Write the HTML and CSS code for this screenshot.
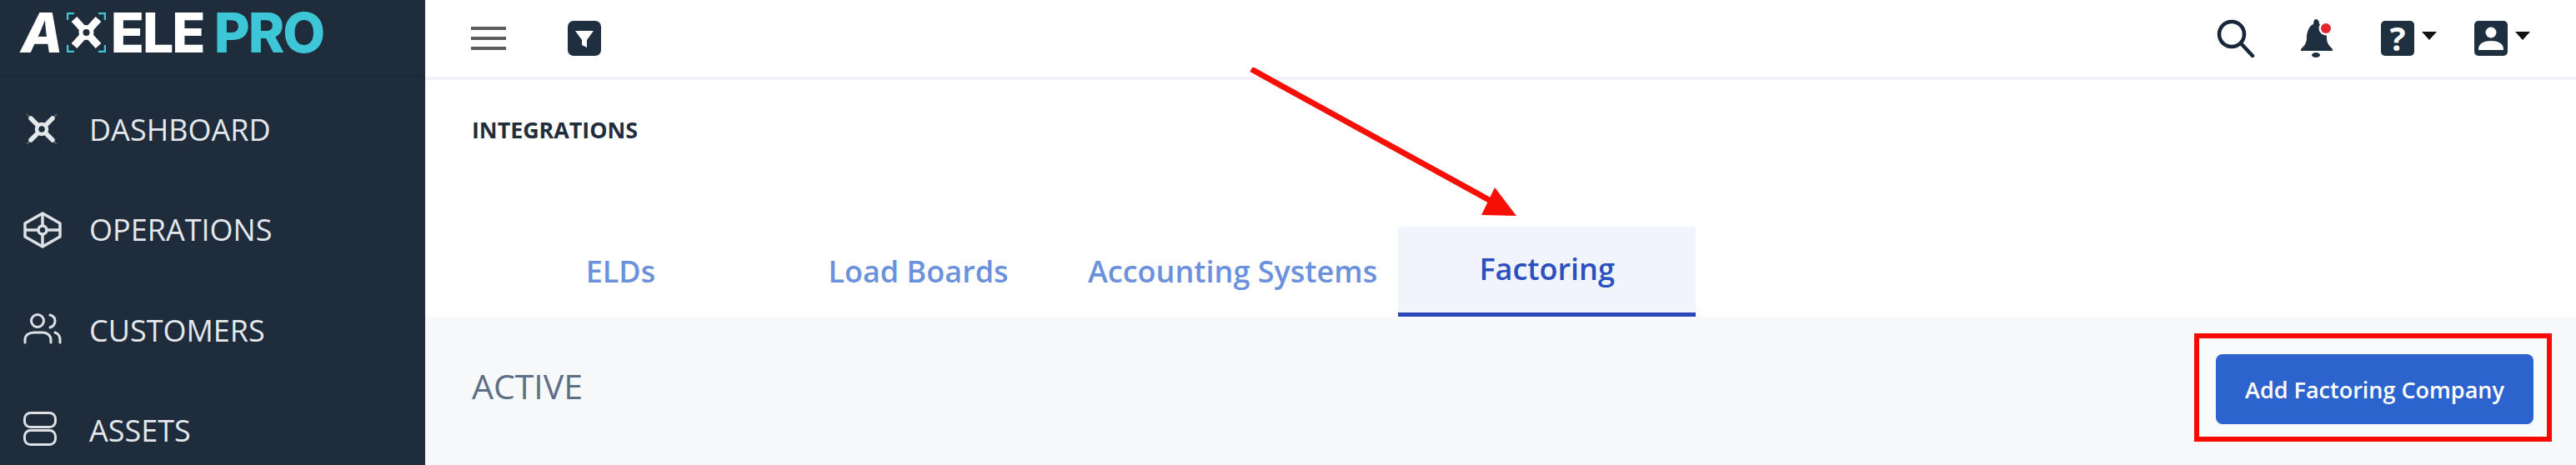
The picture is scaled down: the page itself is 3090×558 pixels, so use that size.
FILE: index.html
```html
<!DOCTYPE html>
<html>
  <head>
    <title>Integrations</title>
    <link rel="stylesheet" href="styles.css">
  </head>
  <body>
    <aside class="sidebar">
      <div class="logo">
        <span class="logo-a">A</span>
        <svg class="logo-x" viewBox="0 0 47 48" width="47" height="48">
          <path d="M9 8 L38 40 M38 8 L9 40" stroke="#fff" stroke-width="9" fill="none"/>
          <circle cx="23.5" cy="24" r="9" fill="#fff"/>
          <circle cx="23.5" cy="24" r="4" fill="#1e2c3c"/>
          <path d="M1 9 V1 H9 M46 9 V1 H38 M1 39 V47 H9 M46 39 V47 H38" stroke="#3cc6d6" stroke-width="2.5" fill="none"/>
        </svg>
        <span class="logo-ele">ELE</span>
        <span class="logo-pro">PRO</span>
      </div>
      <nav class="nav">
        <a class="nav-item">
          <span class="nav-icon">
            <svg viewBox="0 0 44 44" width="44" height="44" fill="none" stroke="#e4e8ec">
              <path d="M4 4 L40 40 M40 4 L4 40" stroke-width="1.5" opacity=".35"/>
              <path d="M9 9 L35 35 M35 9 L9 35" stroke-width="5.5" stroke-linecap="round"/>
              <circle cx="22" cy="22" r="6" fill="#1e2c3c" stroke-width="4.5"/>
            </svg>
          </span>
          DASHBOARD
        </a>
        <a class="nav-item">
          <span class="nav-icon">
            <svg viewBox="0 0 46 44" width="46" height="44" fill="none" stroke="#dde1e6" stroke-width="3.5" stroke-linejoin="round">
              <path d="M23 2 L44 14 V30 L23 42 L2 30 V14 Z"/>
              <path d="M2 22 H44 M23 2 V42"/>
              <circle cx="23" cy="22" r="5" fill="#1e2c3c" stroke-width="3.5"/>
            </svg>
          </span>
          OPERATIONS
        </a>
        <a class="nav-item">
          <span class="nav-icon nudge">
            <svg viewBox="0 0 46 38" width="46" height="38" fill="none" stroke="#dde1e6" stroke-width="3" stroke-linecap="round">
              <circle cx="17" cy="10" r="7.5"/>
              <path d="M32 3 C40 5 40 15 32 18"/>
              <path d="M2 36 V33 C2 27 7 24 13 24 H23 C29 24 33 28 33 33 V36"/>
              <path d="M38 24 C42 25 44 29 44 33 V36"/>
            </svg>
          </span>
          CUSTOMERS
        </a>
        <a class="nav-item">
          <span class="nav-icon nudge">
            <svg viewBox="0 0 40 41" width="40" height="41" fill="none" stroke="#dde1e6" stroke-width="3">
              <rect x="1.5" y="1.5" width="37" height="17" rx="7"/>
              <rect x="1.5" y="22.5" width="37" height="17" rx="7"/>
            </svg>
          </span>
          ASSETS
        </a>
      </nav>
    </aside>

    <div class="main">
      <header class="topbar">
        <div class="topbar-left">
          <div class="burger"><i></i><i></i><i></i></div>
          <svg class="icon-box" viewBox="0 0 40 42" width="40" height="42">
            <rect width="40" height="42" rx="7" fill="#1e2f40"/>
            <path d="M9 12 H31 L23 23 V32 L17 29 V23 Z" fill="#fff"/>
          </svg>
        </div>
        <div class="topbar-right">
          <svg class="search" viewBox="0 0 46 46" width="46" height="46" fill="none" stroke="#18283a" stroke-width="4.5" stroke-linecap="round">
            <circle cx="18" cy="18" r="15"/>
            <path d="M29 29 L43 44"/>
          </svg>
          <svg viewBox="0 0 40 46" width="40" height="46">
            <path d="M19 0 C22 0 23 3 23 6 C30 8 32 15 32 22 C32 29 35 32 39 36 V38 H1 V36 C5 32 8 29 8 22 C8 15 11 8 16 6 C16 3 17 0 19 0 Z" fill="#1e2f40"/>
            <ellipse cx="19" cy="43" rx="5" ry="3" fill="#1e2f40"/>
            <circle cx="31" cy="11" r="8.5" fill="#fff"/>
            <circle cx="31" cy="11" r="6" fill="#e5262c"/>
          </svg>
          <div class="drop">
            <div class="icon-square">?</div>
            <span class="caret"></span>
          </div>
          <div class="drop drop-last">
            <svg viewBox="0 0 40 42" width="40" height="42">
              <rect width="40" height="42" rx="5" fill="#1e2f40"/>
              <circle cx="20" cy="14" r="6.5" fill="#fff"/>
              <path d="M5 34 C5 27 12 24 20 24 C28 24 35 27 35 34 V35 H5 Z" fill="#fff"/>
            </svg>
            <span class="caret"></span>
          </div>
        </div>
      </header>

      <h1 class="page-title">INTEGRATIONS</h1>

      <div class="tabs">
        <a class="tab">ELDs</a>
        <a class="tab">Load Boards</a>
        <a class="tab">Accounting Systems</a>
        <a class="tab tab-active">Factoring</a>
      </div>

      <section class="section">
        <h2 class="section-title">ACTIVE</h2>
        <div class="callout">
          <button class="btn" type="button">Add Factoring Company</button>
        </div>
      </section>

      <!-- red arrow pointing at the active tab -->
      <svg class="arrow" viewBox="0 0 340 190" width="340" height="190">
        <path d="M2 2 L300 166" stroke="#f50f06" stroke-width="7" fill="none"/>
        <path d="M320 178 L294 144 L278 177 Z" fill="#f50f06"/>
      </svg>
    </div>
  </body>
</html>
```

FILE: styles.css
```css
html, body {
  margin: 0;
  height: 100%;
  overflow: hidden;
}
body {
  display: flex;
  background-color: #fff;
  font-family: "Open Sans", sans-serif;
}

/* sidebar */
.sidebar {
  width: 510px;
  flex-shrink: 0;
  background-color: #1e2c3c;
  color: #e4e8ec;
}
.logo {
  height: 92px;
  box-sizing: border-box;
  padding: 0 0 14px 25px;
  display: flex;
  align-items: center;
  border-bottom: 1px solid #1a2735;
  font-family: Inter, sans-serif;
  font-size: 66px;
  font-weight: 800;
  color: #fff;
  letter-spacing: -2px;
}
.logo-a {
  font-style: italic;
  margin-right: 6px;
}
.logo-x {
  margin-right: 6px;
}
.logo-pro {
  color: #3cc6d6;
  margin-left: 12px;
}
.nav {
  padding-top: 3px;
}
.nav-item {
  height: 120.5px;
  display: flex;
  align-items: center;
  padding-left: 28px;
  font-size: 36px;
}
.nav-icon {
  width: 79px;
  display: flex;
}
.nudge {
  margin-bottom: 4px;
}

/* top bar */
.main {
  flex: 1;
  display: flex;
  flex-direction: column;
  position: relative;
}
.topbar {
  height: 92px;
  flex-shrink: 0;
  display: flex;
  justify-content: space-between;
  align-items: center;
  padding: 0 55px;
  border-bottom: 4px solid #f1f2f6;
}
.topbar-left, .topbar-right {
  display: flex;
  align-items: center;
}
.topbar-left {
  gap: 74px;
}
.topbar-right {
  gap: 57px;
}
.search {
  margin-right: -3px;
}
.burger {
  width: 42px;
  display: flex;
  flex-direction: column;
  gap: 8px;
}
.burger i {
  height: 4px;
  background-color: #5c5c5c;
}
.drop {
  display: flex;
  align-items: center;
  gap: 9px;
}
.drop-last {
  margin-left: -12px;
}
.icon-square {
  width: 40px;
  height: 42px;
  border-radius: 5px;
  background-color: #1e2f40;
  color: #fff;
  text-align: center;
  font-size: 40px;
  font-weight: 700;
  line-height: 42px;
}
.caret {
  border-top: 10px solid #111;
  border-left: 9px solid transparent;
  border-right: 9px solid transparent;
  margin-bottom: 6px;
}

/* content */
.page-title {
  margin: 0;
  padding: 41px 0 0 56px;
  height: 127px;
  box-sizing: border-box;
  font-size: 26.8px;
  font-weight: 700;
  color: #1f2d3d;
}
.tabs {
  display: flex;
  padding: 49px 0 0 56px;
}
.tab {
  min-width: 357px;
  height: 108px;
  box-sizing: border-box;
  padding: 0 25px 2px;
  display: flex;
  justify-content: center;
  align-items: center;
  font-size: 36px;
  font-weight: 600;
  color: #6b91dc;
}
.tab-active {
  background-color: #f1f4fb;
  border-bottom: 5px solid #2a47b8;
  color: #2a4fc0;
}
.section {
  flex: 1;
  display: flex;
  justify-content: space-between;
  align-items: flex-start;
  padding: 20px 29px 0 56px;
  background-color: #f7f8f9;
}
.section-title {
  margin: 35px 0 0;
  font-size: 41px;
  font-weight: 500;
  color: #5b6f85;
}
.callout {
  border: 6px solid #f80a00;
  padding: 19px 16px 15px 20px;
  background-color: #f7fbfb;
}
.btn {
  display: block;
  width: 381px;
  height: 84px;
  padding: 0;
  border: 0;
  border-radius: 8px;
  background-color: #2d63cc;
  color: #fff;
  font-family: inherit;
  font-size: 27px;
  font-weight: 600;
}

.arrow {
  position: absolute;
  left: 989px;
  top: 81px;
}
```
